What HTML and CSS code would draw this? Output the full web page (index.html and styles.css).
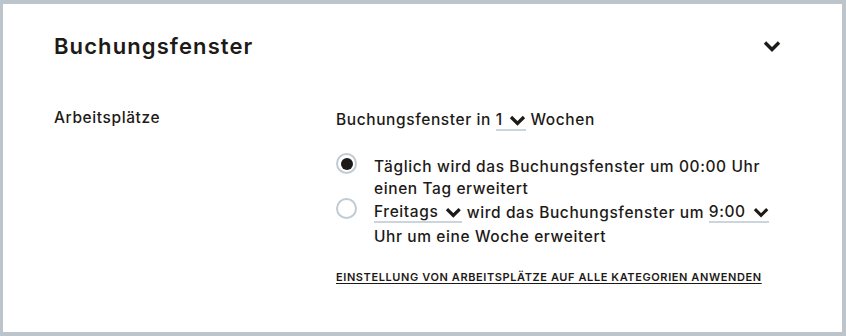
FILE: index.html
```html
<!DOCTYPE html>
<html lang="de">
<head>
    <meta charset="UTF-8">
    <title>Buchungsfenster</title>
    <link rel="stylesheet" href="styles.css">
</head>
<body>

    <div class="card">
        <div class="card-header">
            <h2>Buchungsfenster</h2>
            <button class="toggle" aria-label="Einklappen">
                <svg width="18" height="12" viewBox="0 0 18 12">
                    <path d="M2 2.5 L9 9.5 L16 2.5" fill="none" stroke="#1d1a17" stroke-width="3.4"/>
                </svg>
            </button>
        </div>

        <div class="setting-row">
            <div class="setting-label">Arbeitsplätze</div>

            <div class="setting-body">
                <p class="weeks">
                    Buchungsfenster in
                    <span class="select select-small">1
                        <svg class="caret" width="17" height="11" viewBox="0 0 17 11"><path d="M2 2 L8.5 8.5 L15 2" fill="none" stroke="#1d1a17" stroke-width="3.3"/></svg>
                    </span>
                    Wochen
                </p>

                <div class="options">
                    <label class="option">
                        <span class="radio checked"></span>
                        <span class="option-text">Täglich wird das Buchungsfenster um 00:00 Uhr einen Tag erweitert</span>
                    </label>
                    <label class="option">
                        <span class="radio"></span>
                        <span class="option-text tall">
                            <span class="select select-day">Freitags
                                <svg class="caret" width="17" height="11" viewBox="0 0 17 11"><path d="M2 2 L8.5 8.5 L15 2" fill="none" stroke="#1d1a17" stroke-width="3.3"/></svg>
                            </span>
                            wird das Buchungsfenster um
                            <span class="select select-time">9:00
                                <svg class="caret" width="17" height="11" viewBox="0 0 17 11"><path d="M2 2 L8.5 8.5 L15 2" fill="none" stroke="#1d1a17" stroke-width="3.3"/></svg>
                            </span>
                            Uhr um eine Woche erweitert
                        </span>
                    </label>
                </div>

                <a class="apply-link" href="#">EINSTELLUNG VON ARBEITSPLÄTZE AUF ALLE KATEGORIEN ANWENDEN</a>
            </div>
        </div>
    </div>

</body>
</html>
```

FILE: styles.css
```css
body {
    margin: 0;
    padding: 4px 4px 4px 3px;
    background: #bcc5cc;
    font-family: Inter, "Open Sans", sans-serif;
    color: #1d1a17;
}

.card {
    background: white;
    height: 328px;
    box-sizing: border-box;
    padding: 28px 61px 0 51px;
}

/* Header */
.card-header {
    display: flex;
    justify-content: space-between;
    align-items: center;
}

.card-header h2 {
    margin: 0;
    font-size: 22px;
    font-weight: 600;
    line-height: 28px;
    letter-spacing: 1.1px;
}

.toggle {
    background: none;
    border: none;
    padding: 0;
    display: flex;
    cursor: pointer;
}

/* Setting row */
.setting-row {
    display: grid;
    grid-template-columns: 282px 1fr;
    margin-top: 49px;
    font-size: 15.5px;
    font-weight: 500;
    letter-spacing: 0.6px;
}

.setting-label {
    line-height: 22px;
    margin-top: -2px;
}

.weeks {
    margin: 0;
    line-height: 22px;
    height: 22px;
}

.select {
    display: inline-flex;
    align-items: center;
    gap: 7px;
    height: 22px;
    box-sizing: border-box;
    border-bottom: 2px solid #cdd5dc;
    vertical-align: top;
    padding-top: 2px;
}

.select-small {
    width: 30px;
    gap: 6px;
}

.select-day {
    width: 88px;
}

.select-time {
    width: 60px;
}

.caret {
    display: block;
    margin-left: auto;
}

/* Radio options */
.options {
    margin-top: 25px;
    display: flex;
    flex-direction: column;
    gap: 1px;
}

.option {
    display: flex;
    gap: 17px;
    cursor: pointer;
}

.option-text {
    line-height: 22px;
    max-width: 402px;
}

.option-text.tall {
    line-height: 24px;
}

.radio {
    flex: none;
    width: 17px;
    height: 17px;
    border: 2px solid #c1cbd3;
    border-radius: 50%;
    margin: -3px 0 0 0;
    position: relative;
}

.radio.checked::after {
    content: "";
    position: absolute;
    top: 2.5px;
    left: 2.5px;
    width: 12px;
    height: 12px;
    border-radius: 50%;
    background: #1d1a17;
}

.apply-link {
    display: inline-block;
    margin-top: 21px;
    font-size: 11px;
    font-weight: 600;
    letter-spacing: 0.6px;
    color: #1d1a17;
    text-decoration: underline;
    text-underline-offset: 2px;
}
```
